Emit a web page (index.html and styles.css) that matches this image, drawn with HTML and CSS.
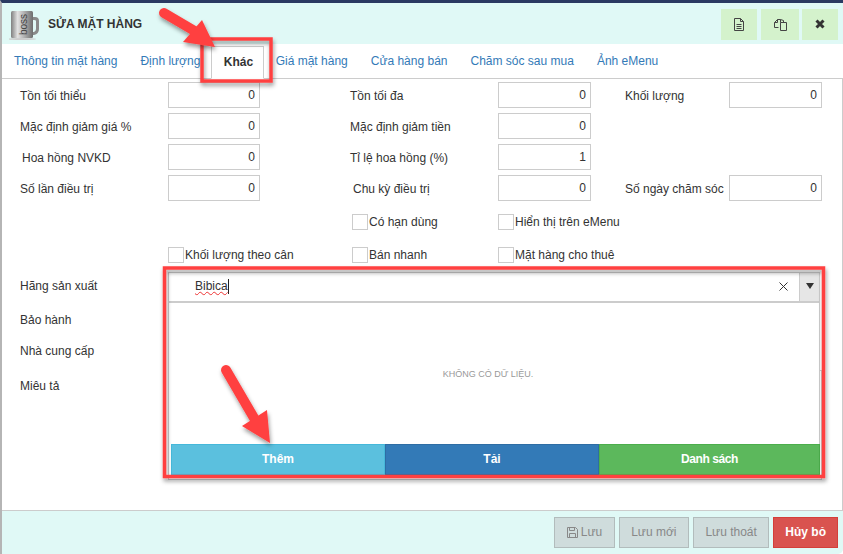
FILE: index.html
```html
<!DOCTYPE html>
<html>
<head>
  <title>Sửa mặt hàng</title>
  <link rel="stylesheet" href="styles.css">
</head>
<body>
  <div class="modal">
    <div class="header">
      <svg class="logo" width="31" height="32" viewBox="0 0 31 32">
        <defs>
          <linearGradient id="steel" x1="0" x2="1" y1="0" y2="0">
            <stop offset="0" stop-color="#808080"/>
            <stop offset="0.3" stop-color="#e2e2e2"/>
            <stop offset="0.6" stop-color="#b0b0b0"/>
            <stop offset="1" stop-color="#6e6e6e"/>
          </linearGradient>
        </defs>
        <path d="M22 8h4q4 0 4 4v8q0 5-5 6h-3v-3h3q2-1 2-3v-8q0-1-2-1h-3z" fill="#8a8a8a"/>
        <rect x="2" y="2" width="22" height="27" rx="1.5" fill="url(#steel)"/>
        <ellipse cx="13" cy="30" rx="14" ry="1" fill="#ccc"/>
        <text class="logo-text" transform="translate(18 26) rotate(-90)">boss</text>
      </svg>
      <div class="title">SỬA MẶT HÀNG</div>
      <div class="tools">
        <div class="tool">
          <svg width="12" height="13" viewBox="0 0 12 13" fill="none" stroke="#444"><path d="M1.5.5h6l3 3v9h-9zM7.5.5v3h3M3.5 6.5h5M3.5 8.5h5M3.5 10.5h5"/></svg>
        </div>
        <div class="tool tool-wide">
          <svg width="13" height="13" viewBox="0 0 13 13" fill="none" stroke="#444"><path d="M4.500 9.500h-4v-5l3-3h3v3M3.500 1.500v3h-3M6.500 4.500h6v8h-6zM9.500 2.500v2M6.500 1.500l3 1"/></svg>
        </div>
        <div class="tool">
          <svg width="10" height="10" viewBox="0 0 10 10" stroke="#333" stroke-width="3"><path d="M1.500 1.500l7 7M8.500 1.500l-7 7"/></svg>
        </div>
      </div>
    </div>

    <div class="tabs">
      <a class="tab">Thông tin mặt hàng</a>
      <a class="tab">Định lượng</a>
      <a class="tab active">Khác</a>
      <a class="tab">Giá mặt hàng</a>
      <a class="tab">Cửa hàng bán</a>
      <a class="tab">Chăm sóc sau mua</a>
      <a class="tab">Ảnh eMenu</a>
    </div>

    <div class="body">
      <div class="fields">
        <label class="lbl col-a">Tồn tối thiểu</label>
        <div class="num col-a-in">0</div>
        <label class="lbl col-b">Tồn tối đa</label>
        <div class="num col-b-in">0</div>
        <label class="lbl col-c">Khối lượng</label>
        <div class="num col-c-in">0</div>

        <label class="lbl col-a">Mặc định giảm giá %</label>
        <div class="num col-a-in">0</div>
        <label class="lbl col-b">Mặc định giảm tiền</label>
        <div class="num col-b-in">0</div>

        <label class="lbl col-a nudge">Hoa hồng NVKD</label>
        <div class="num col-a-in">0</div>
        <label class="lbl col-b">Tỉ lệ hoa hồng (%)</label>
        <div class="num col-b-in">1</div>

        <label class="lbl col-a">Số lần điều trị</label>
        <div class="num col-a-in">0</div>
        <label class="lbl col-b nudge-b">Chu kỳ điều trị</label>
        <div class="num col-b-in">0</div>
        <label class="lbl col-c">Số ngày chăm sóc</label>
        <div class="num col-c-in">0</div>
      </div>

      <div class="checks">
        <div class="check col-b pad"><span class="box"></span>Có hạn dùng</div>
        <div class="check col-b-in wide"><span class="box"></span>Hiển thị trên eMenu</div>
        <div class="check col-a-wide"><span class="box"></span>Khối lượng theo cân</div>
        <div class="check col-b pad"><span class="box"></span>Bán nhanh</div>
        <div class="check col-b-in wide"><span class="box"></span>Mặt hàng cho thuê</div>
      </div>

      <div class="lower">
        <label class="lbl row-maker">Hãng sản xuất</label>
        <div class="combo">
          <span class="combo-text">Bibica</span>
          <svg class="combo-clear" width="9" height="9" viewBox="0 0 9 9" stroke="#333"><path d="M.5.500l8 8M8.500.500l-8 8"/></svg>
          <span class="combo-arrow"><i></i></span>
          <div class="drop">
            <div class="empty">KHÔNG CÓ DỮ LIỆU.</div>
            <div class="drop-btns">
              <div class="drop-btn info">Thêm</div>
              <div class="drop-btn primary">Tải</div>
              <div class="drop-btn success">Danh sách</div>
            </div>
          </div>
        </div>
        <label class="lbl row-warranty">Bảo hành</label>
        <div></div>
        <label class="lbl row-supplier">Nhà cung cấp</label>
        <div></div>
        <label class="lbl row-desc">Miêu tả</label>
        <div class="memo">
          <svg class="grip" width="10" height="10" viewBox="0 0 10 10" stroke="#555"><path d="M1 9l8-8M4 9l5-5M7 9l2-2"/></svg>
        </div>
      </div>
    </div>

    <div class="footer">
      <div class="btn off">
        <svg width="11" height="11" viewBox="0 0 11 11" fill="none" stroke="#888"><path d="M.5.500h8l2 2v8h-10zM2.500.500v3h5v-3M2.500 10.500v-4h6v4"/></svg>
        Lưu
      </div>
      <div class="btn off">Lưu mới</div>
      <div class="btn off">Lưu thoát</div>
      <div class="btn danger">Hủy bỏ</div>
    </div>
  </div>

  <!-- red marks drawn on the screenshot -->
  <svg class="marks" width="843" height="554" viewBox="0 0 843 554">
    <defs>
      <filter id="shade" x="-20%" y="-20%" width="140%" height="140%">
        <feDropShadow dx="1" dy="3" stdDeviation="2" flood-color="#000" flood-opacity="0.4"/>
      </filter>
    </defs>
    <g filter="url(#shade)" fill="none" stroke="#ff4040">
      <rect x="202" y="39" width="69" height="42" stroke-width="3.500"/>
      <rect x="164.500" y="268" width="659" height="208.500" stroke-width="3.500"/>
    </g>
    <g filter="url(#shade)" fill="#ff4040" stroke="#ff4040" stroke-linecap="round">
      <path d="M164 13L198 33" stroke-width="10"/>
      <path d="M215 47L183 42L202 20z" stroke="none"/>
      <path d="M226 370L254 418" stroke-width="10"/>
      <path d="M270 443L242 426L267 410z" stroke="none"/>
    </g>
  </svg>
</body>
</html>
```

FILE: styles.css
```css
html, body {
  margin: 0;
  padding: 0;
}

body {
  width: 843px;
  height: 554px;
  overflow: hidden;
  background: #fff;
  font-family: "Liberation Sans", Arial, sans-serif;
  font-size: 12px;
  color: #333;
  position: relative;
}

.modal {
  height: 554px;
  box-sizing: border-box;
  border-top: 3px solid #2a3a62;
  border-left: 2px solid #b5b5b5;
  display: flex;
  flex-direction: column;
}

.header {
  height: 41px;
  flex: none;
  background: #e0f9f6;
  display: flex;
  align-items: center;
  padding: 0 5px 0 7px;
}

.logo {
  margin-top: 3px;
}

.logo-text {
  font-family: "Liberation Sans", Arial, sans-serif;
  font-size: 10px;
  fill: #444;
}

.title {
  font-size: 12px;
  font-weight: bold;
  margin-left: 8px;
  color: #333;
}

.tools {
  margin-left: auto;
  display: flex;
  gap: 4px;
  margin-top: 1px;
}

.tool {
  width: 36px;
  height: 31px;
  background: #d4f2cc;
  display: flex;
  align-items: center;
  justify-content: center;
}

.tool-wide {
  width: 38px;
  margin-right: -1px;
}

.tabs {
  height: 35px;
  flex: none;
  display: flex;
  align-items: flex-end;
  box-sizing: border-box;
  border-bottom: 1px solid #ccc;
  padding-left: 0.5px;
}

.tab {
  padding: 0 11.5px;
  height: 32px;
  line-height: 31px;
  color: #337ab7;
  box-sizing: border-box;
}

.tab.active {
  color: #333;
  font-weight: bold;
  background: #fff;
  border: 1px solid #ccc;
  border-bottom: 1px solid #fff;
  height: 33px;
  margin-bottom: -1px;
  padding: 0 10px 0 12px;
  margin-left: -1px;
}

.body {
  flex: 1;
  padding: 3px 0 0 18px;
  border-right: 1px solid #ccc;
}

.fields, .checks {
  display: grid;
  grid-template-columns: 148px 92px 90px 148px 93px 34px 104px 93px;
}

.fields {
  grid-auto-rows: 26px;
  row-gap: 5px;
}

.checks {
  margin-top: 13px;
  grid-auto-rows: 16px;
  row-gap: 17px;
}

.lbl {
  display: flex;
  align-items: center;
  padding-top: 2px;
  box-sizing: border-box;
}

.nudge {
  padding-left: 2px;
}

.nudge-b {
  padding-left: 3px;
}

.col-a {
  grid-column: 1;
}

.col-a-in {
  grid-column: 2;
}

.col-a-wide {
  grid-column: 2 / 4;
}

.col-b {
  grid-column: 4;
}

.col-b-in {
  grid-column: 5;
}

.col-c {
  grid-column: 7;
}

.col-c-in {
  grid-column: 8;
}

.wide {
  grid-column: 5 / 9;
}

.pad {
  padding-left: 2px;
}

.num {
  border: 1px solid #ccc;
  text-align: right;
  line-height: 25px;
  padding-right: 4px;
  box-sizing: border-box;
}

.check {
  display: flex;
  align-items: center;
  white-space: nowrap;
}

.box {
  width: 16px;
  height: 16px;
  box-sizing: border-box;
  border: 1px solid #ccc;
  margin-right: 1px;
  flex: none;
}

.lower {
  margin-top: 9px;
  display: grid;
  grid-template-columns: 148px 654px;
}

.row-maker {
  height: 26px;
  margin-bottom: 4px;
}

.row-warranty {
  height: 30px;
  margin-top: 2px;
}

.row-supplier {
  height: 30px;
  margin-top: 1px;
}

.row-desc {
  height: 30px;
  margin-top: 5px;
}

.memo {
  height: 110px;
  margin-top: 5px;
  border: 1px solid #ccc;
  box-sizing: border-box;
  display: flex;
  align-items: flex-end;
  justify-content: flex-end;
}

.grip {
  display: block;
}

.combo {
  position: relative;
  height: 30px;
  box-sizing: border-box;
  border: 1px solid #ccc;
  background: #fff;
  display: flex;
  align-items: center;
  width: 652px;
  z-index: 2;
}

.combo-text {
  margin: 0 0 2px 26px;
  text-decoration: underline wavy #e33;
  text-decoration-thickness: 1px;
  border-right: 1px solid #222;
  line-height: 15px;
}

.combo-clear {
  margin: 0 11px 2px auto;
}

.combo-arrow {
  width: 20px;
  height: 28px;
  background: #e6e6e6;
  border-left: 1px solid #ccc;
  display: flex;
  align-items: center;
  justify-content: center;
  padding-bottom: 2px;
  box-sizing: border-box;
}

.combo-arrow i {
  border-left: 4px solid transparent;
  border-right: 4px solid transparent;
  border-top: 6px solid #333;
}

.drop {
  position: absolute;
  left: -1px;
  right: -1px;
  top: 100%;
  margin-top: 1px;
  height: 174px;
  box-sizing: border-box;
  border: 1px solid #ccc;
  border-bottom: 0;
  background: #fff;
  display: flex;
  flex-direction: column;
  padding: 0 0 1px 2px;
}

.empty {
  flex: 1;
  display: flex;
  align-items: center;
  justify-content: center;
  font-size: 9px;
  color: #999;
  padding-right: 14px;
}

.drop-btns {
  display: grid;
  grid-template-columns: 214px 214px 221px;
  height: 31px;
}

.drop-btn {
  color: #fff;
  font-weight: bold;
  text-align: center;
  line-height: 29px;
  box-sizing: border-box;
  border: 1px solid transparent;
}

.info {
  background: #5bc0de;
  border-color: #46b8da;
}

.primary {
  background: #337ab7;
  border-color: #2e6da4;
}

.success {
  background: #5cb85c;
  border-color: #4cae4c;
  letter-spacing: -0.4px;
}

.footer {
  height: 44px;
  flex: none;
  box-sizing: border-box;
  border-top: 1px solid #ccc;
  background: #e0f9f6;
  display: flex;
  justify-content: flex-end;
  align-items: flex-start;
  gap: 4px;
  padding: 6px 5px 0 0;
  border-bottom-right-radius: 5px;
}

.btn {
  height: 31px;
  box-sizing: border-box;
  border: 1px solid #aaa;
  padding: 0 11.500px;
  line-height: 29px;
  display: flex;
  align-items: center;
  gap: 3px;
}

.off {
  background: #cfdcdc;
  border-color: #b2bcbc;
  color: #888;
}

.danger {
  background: #d9534f;
  border-color: #d43f3a;
  color: #fff;
  font-weight: bold;
  padding: 0 11px;
}

.marks {
  position: absolute;
  left: 0;
  top: 0;
  z-index: 5;
  pointer-events: none;
}
```
